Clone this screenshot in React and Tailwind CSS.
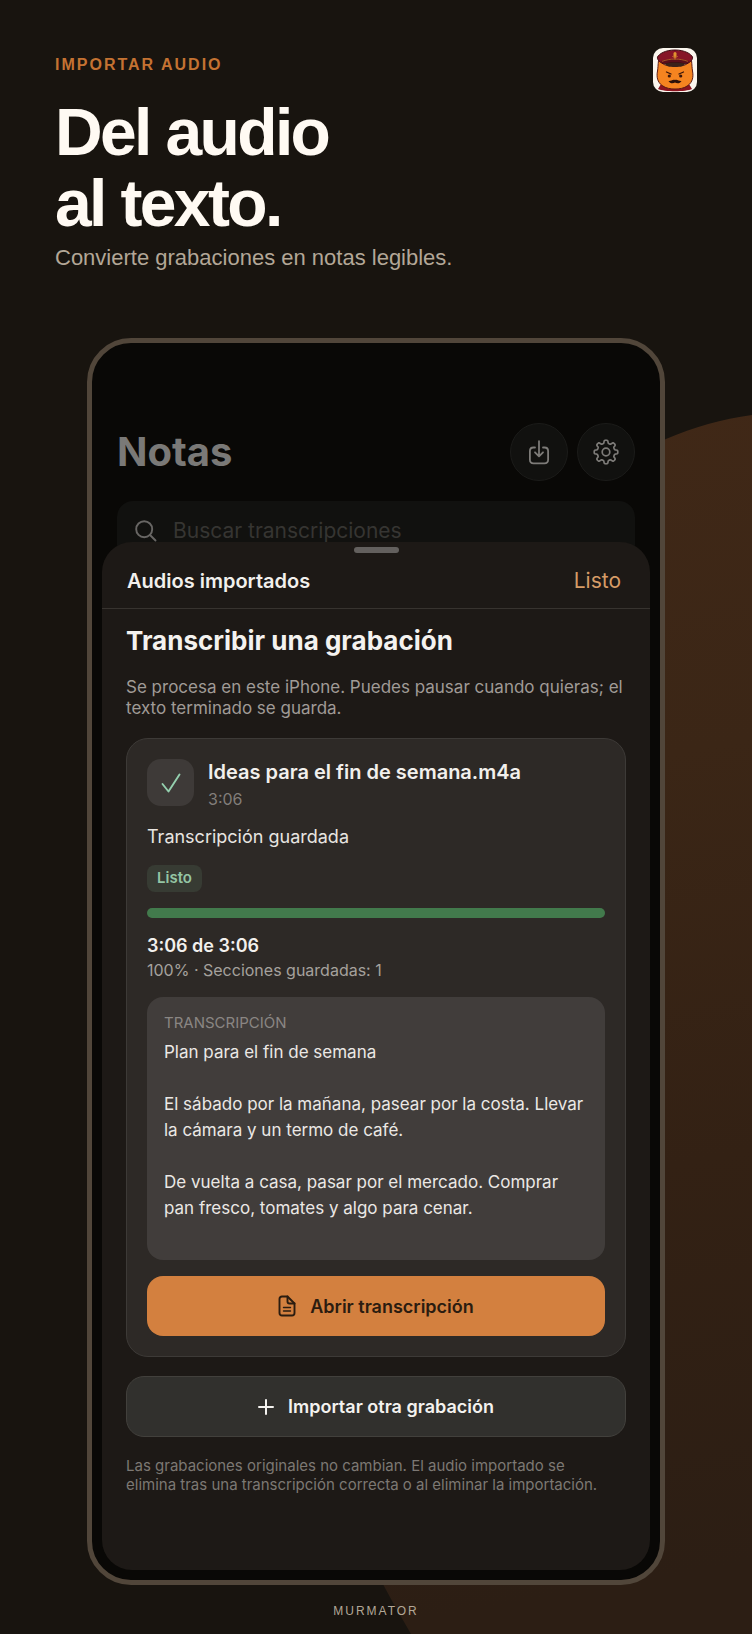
import React from "react";

function Backdrop() {
  return (
    <svg
      aria-hidden="true"
      className="absolute right-0 bottom-0 h-full w-[752px]"
      viewBox="0 0 752 1634"
      preserveAspectRatio="xMaxYMax slice"
      fill="none"
    >
      <defs>
        <linearGradient id="glow" x1="560" y1="420" x2="760" y2="1560" gradientUnits="userSpaceOnUse">
          <stop offset="0" stopColor="#402817" />
          <stop offset="0.3" stopColor="#3b2616" />
          <stop offset="0.65" stopColor="#332114" />
          <stop offset="1" stopColor="#2c1e14" />
        </linearGradient>
      </defs>
      <path
        d="M411 1634C402 1618 393 1603 384 1586C170 1180 320 590 666 439C694 427 722 419 752 415V1634Z"
        fill="url(#glow)"
      />
    </svg>
  );
}

function Logo() {
  return (
    <svg viewBox="0 0 44 44" className="size-11 rounded-[10px]" role="img" aria-label="Murmator">
      <rect width="44" height="44" fill="#fbf6ee" />
      <path d="M8 36L5 41C11 44 33 44 39 41L36 36Z" fill="#8c1420" />
      <path d="M5.500 12.500C5 17 5 20 4.500 23C3.300 29 4.500 34 9 37.500C13 40.500 18 41 22 41C26 41 31 40.500 35 37.500C39.500 34 40.700 29 39.500 23C39 20 39 17 38.500 12.500L32 17H12Z" fill="#f58420" stroke="#5b1a12" strokeWidth="1" />
      <path d="M12 15C16 13 28 13 32 15C32 18.500 28 19 22 19C16 19 12 18.500 12 15Z" fill="#3a211a" />
      <path d="M4.500 9C6 6 12 2 22 2C32 2 38 6 39.500 9C40 11.500 38 13.500 34 15.800C27 13.500 17 13.500 10 15.800C6 13.500 4 11.500 4.500 9Z" fill="#861527" stroke="#3e0b12" strokeWidth="1" />
      <path d="M8 13C16 10 28 10 36 13L34 15.800C27 13.500 17 13.500 10 15.800Z" fill="#5a0e1b" />
      <path d="M9 13.400C17 10.300 27 10.300 35 13.400" stroke="#c8752c" strokeWidth="0.700" fill="none" />
      <rect x="20.500" y="4" width="3" height="5" rx="1.500" fill="#e0942f" />
      <path d="M19.500 8C20 10 24 10 24.500 8M22 9.500V11.500" stroke="#e0942f" strokeWidth="0.800" fill="none" />
      <path d="M13.500 24L18 26M30.500 24L26 26" stroke="#3a160b" strokeWidth="1.300" strokeLinecap="round" />
      <circle cx="16.300" cy="28" r="1.600" fill="#3a160b" />
      <circle cx="27.700" cy="28" r="1.600" fill="#3a160b" />
      <path d="M15.500 33C18 33.500 19.500 31 22 32C24.500 31 26 33.500 28.500 33C27 36 23.500 35.600 22 34.500C20.500 35.600 17 36 15.500 33Z" fill="#2c110a" />
    </svg>
  );
}

function ImportIcon() {
  return (
    <svg viewBox="0 0 26 26" className="size-[26px]" fill="none" stroke="currentColor" strokeWidth="1.8" strokeLinecap="round" strokeLinejoin="round" aria-hidden="true">
      <path d="M9 8.500H7.500C5 8.500 3.900 9.800 3.900 12V20.800C3.900 23 5 24.300 7.500 24.300H18.500C21 24.300 22.100 23 22.100 20.800V12C22.100 9.800 21 8.500 18.500 8.500H17" />
      <path d="M13 2.200V17M9 13.300L13 17.300L17 13.300" />
    </svg>
  );
}

const gearPoints = Array.from({ length: 160 }, (_, i) => {
  const angle = (i * Math.PI) / 80;
  const radius = 10.3 + 1.5 * Math.tanh(2.4 * Math.cos(8 * angle));
  return `${(13 + radius * Math.sin(angle)).toFixed(2)} ${(13 - radius * Math.cos(angle)).toFixed(2)}`;
});

function GearIcon() {
  return (
    <svg viewBox="0 0 26 26" className="size-[26px]" fill="none" stroke="currentColor" strokeWidth="1.7" strokeLinejoin="round" aria-hidden="true">
      <path d={`M${gearPoints.join("L")}Z`} />
      <circle cx="13" cy="13" r="3.800" />
    </svg>
  );
}

function SearchIcon() {
  return (
    <svg viewBox="0 0 22 22" className="size-[22px] shrink-0" fill="none" stroke="currentColor" strokeWidth="1.9" strokeLinecap="round" aria-hidden="true">
      <circle cx="9.200" cy="9.200" r="8" />
      <path d="M15 15L20.500 20.500" />
    </svg>
  );
}

function CheckIcon() {
  return (
    <svg viewBox="0 0 20 20" className="size-5" fill="none" stroke="currentColor" strokeWidth="1.9" strokeLinecap="round" strokeLinejoin="round" aria-hidden="true">
      <path d="M1.500 11L7.500 18.500L18.500 1.500" />
    </svg>
  );
}

function DocumentIcon() {
  return (
    <svg viewBox="0 0 18 22" className="h-[22px] w-[18px]" fill="none" stroke="currentColor" strokeWidth="1.900" strokeLinecap="round" strokeLinejoin="round" aria-hidden="true">
      <path d="M4 1.500H9.500L16.500 8.500V18C16.500 19.600 15.600 20.500 14 20.500H4C2.400 20.500 1.500 19.600 1.500 18V4C1.500 2.400 2.400 1.500 4 1.500Z" />
      <path d="M9.500 1.500V6.500C9.500 7.800 10.200 8.500 11.500 8.500H16.500" />
      <path d="M5.500 12.500H12.500M5.500 16H12.500" strokeWidth="1.400" />
    </svg>
  );
}

function PlusIcon() {
  return (
    <svg viewBox="0 0 16 16" className="size-4" fill="none" stroke="currentColor" strokeWidth="2" strokeLinecap="round" aria-hidden="true">
      <path d="M8 1V15M1 8H15" />
    </svg>
  );
}

function RoundButton({ label, children }) {
  return (
    <button type="button" aria-label={label} className="flex size-[58px] items-center justify-center rounded-full border border-[#1b1b19] bg-[#11110f] text-[#7d7b78]">
      {children}
    </button>
  );
}

function ImportCard() {
  return (
    <article className="mt-[19px] rounded-[22px] border border-[#3d3a37] bg-[#2d2926] p-5">
      <div className="flex items-start gap-[14px]">
        <span className="flex size-[47px] shrink-0 items-center justify-center rounded-[14px] bg-[#3e3a38] text-[#94cfae]">
          <CheckIcon />
        </span>
        <div>
          <h3 className="text-[20px] leading-[26px] font-semibold text-[#f2f0ed]">Ideas para el fin de semana.m4a</h3>
          <p className="mt-1 text-base leading-5 text-[#827e7a]">3:06</p>
        </div>
      </div>
      <p className="mt-4 text-[18px] leading-6 text-[#e8e5e1]">Transcripción guardada</p>
      <span className="mt-4 inline-flex h-[27px] items-center rounded-lg bg-[#373b33] px-[10px] align-top text-[15px] font-semibold text-[#94c5a4]">
        Listo
      </span>
      <div role="progressbar" aria-label="Progreso" aria-valuenow={100} aria-valuemin={0} aria-valuemax={100} className="mt-4 h-[10px] rounded-full bg-[#427a4c]" />
      <p className="mt-4 text-[18px] leading-6 font-semibold text-[#f2f0ed]">3:06 de 3:06</p>
      <p className="mt-[2px] text-base leading-5 text-[#a5a19d]">100% · Secciones guardadas: 1</p>
      <section className="mt-[17px] rounded-2xl bg-[#413d3b] px-[17px] pt-4 pb-[39px]">
        <h4 className="text-[15px] leading-5 text-[#8a8683]">TRANSCRIPCIÓN</h4>
        <div className="mt-[6px] flex flex-col gap-[26px] text-[17px] leading-[26px] text-[#ebe8e5]">
          <p>Plan para el fin de semana</p>
          <p>El sábado por la mañana, pasear por la costa. Llevar la cámara y un termo de café.</p>
          <p>De vuelta a casa, pasar por el mercado. Comprar pan fresco, tomates y algo para cenar.</p>
        </div>
      </section>
      <button type="button" className="mt-4 flex h-[60px] w-full items-center justify-center gap-[14px] rounded-2xl bg-[#d3803f] text-[18px] font-semibold text-[#2b1c10]">
        <DocumentIcon />
        Abrir transcripción
      </button>
    </article>
  );
}

function ImportSheet() {
  return (
    <section className="relative mx-[10px] -mt-[19px] rounded-[30px] bg-[#1d1916] pt-[5px] pb-[76px]">
      <div className="mx-auto h-[6px] w-[45px] rounded-full bg-[#63605e]" />
      <header className="flex items-center justify-between border-b border-[#37332f] px-[25px] pt-[14px] pb-[13px] text-[20px] leading-7">
        <h2 className="font-semibold text-[#f2f0ed]">Audios importados</h2>
        <button type="button" className="pr-1 text-[21px] text-[#d79c67]">Listo</button>
      </header>
      <div className="px-6 pt-[14px]">
        <h2 className="text-[26px] leading-[35px] font-bold text-[#f4f2ef]">Transcribir una grabación</h2>
        <p className="mt-[19px] text-[17px] leading-[21px] text-[#a09b96]">
          Se procesa en este iPhone. Puedes pausar cuando quieras; el texto terminado se guarda.
        </p>
        <ImportCard />
        <button type="button" className="mt-[19px] flex h-[61px] w-full items-center justify-center gap-[14px] rounded-[18px] border border-[#42403c] bg-[#31302d] text-[18px] font-semibold text-[#f4f2ef]">
          <PlusIcon />
          Importar otra grabación
        </button>
        <p className="mt-[19px] pr-3 text-[15px] leading-[19px] text-[#7c7873]">
          Las grabaciones originales no cambian. El audio importado se elimina tras una transcripción correcta o al eliminar la importación.
        </p>
      </div>
    </section>
  );
}

function Phone() {
  return (
    <div className="mt-[66px] overflow-hidden rounded-[44px] border-[5px] border-[#51463a] bg-[#090806] pt-20 pb-[10px] font-['Inter',sans-serif]">
      <div className="px-[25px]">
        <div className="flex items-center justify-between">
          <h2 className="text-[40px] leading-[48px] font-bold text-[#7a7977]">Notas</h2>
          <div className="flex gap-[9px]">
            <RoundButton label="Importar"><ImportIcon /></RoundButton>
            <RoundButton label="Ajustes"><GearIcon /></RoundButton>
          </div>
        </div>
        <label className="mt-5 flex h-[60px] items-center gap-4 rounded-2xl bg-[#11110f] px-[18px] text-[#686664]">
          <SearchIcon />
          <input
            type="search"
            aria-label="Buscar transcripciones"
            placeholder="Buscar transcripciones"
            className="min-w-0 flex-1 bg-transparent text-[21px] leading-7 outline-none placeholder:text-[#363532]"
          />
        </label>
      </div>
      <ImportSheet />
    </div>
  );
}

export default function App() {
  return (
    <main className="relative min-h-screen overflow-hidden bg-[#18140f] font-['Liberation_Sans',Arial,sans-serif]">
      <Backdrop />
      <div className="relative px-[87px] pb-[15px]">
        <div className="-mx-8 flex items-start justify-between pt-12">
          <div className="pt-[7px]">
            <p className="text-base leading-5 font-bold tracking-[2px] text-[#c47232]">IMPORTAR AUDIO</p>
            <h1 className="mt-[22px] text-[66px] leading-[71px] font-bold tracking-[-0.04em] text-[#fffaf3]">
              Del audio
              <br />
              al texto.
            </h1>
            <p className="mt-[5px] text-[22px] leading-7 text-[#b3a797]">Convierte grabaciones en notas legibles.</p>
          </div>
          <Logo />
        </div>
        <Phone />
        <p className="mt-[18px] text-center text-[12px] leading-4 tracking-[2px] text-[#b3a797]">MURMATOR</p>
      </div>
    </main>
  );
}
